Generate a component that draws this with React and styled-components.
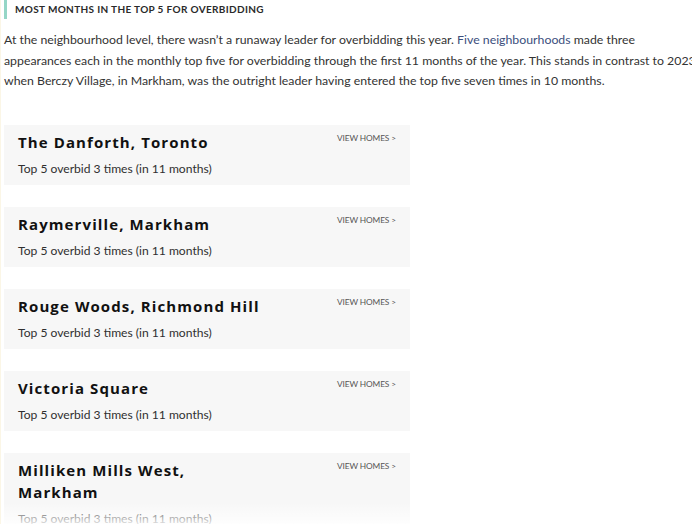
import React from 'react';
import styled, { createGlobalStyle } from 'styled-components';

const Global = createGlobalStyle`
  html, body {
    margin: 0;
    padding: 0;
    background: #fff;
    overflow: hidden;
  }
  body {
    font-family: Lato, "Liberation Sans", sans-serif;
    color: #333;
  }
`;

const Page = styled.div`
  width: 692px;
  height: 524px;
  padding-left: 3px;
  border-left: 1px solid #fbf6e6;
  box-sizing: border-box;
  position: relative;
  overflow: hidden;
`;

const SectionHeading = styled.h3`
  margin: 0;
  height: 19px;
  line-height: 19px;
  border-left: 3px solid #95d6c6;
  padding-left: 8px;
  font-size: 10px;
  font-weight: 700;
  letter-spacing: 0.35px;
  text-transform: uppercase;
  color: #2a2a2a;
`;

const Paragraph = styled.p`
  margin: 11px 0 0;
  font-size: 12.3px;
  line-height: 20.5px;
  color: #333;
  white-space: nowrap;
`;

const Link = styled.a`
  color: #3b4f7d;
  text-decoration: none;
`;

const CardList = styled.div`
  display: flex;
  flex-direction: column;
  gap: 22px;
  margin-top: 33px;
  width: 406px;
`;

const Card = styled.div`
  display: flex;
  justify-content: space-between;
  align-items: flex-start;
  background: #f7f7f7;
  padding: 6px 14px 6px 14px;
`;

const CardBody = styled.div`
  display: flex;
  flex-direction: column;
  gap: 6px;
`;

const Title = styled.div`
  font-family: "Open Sans", "DejaVu Sans", sans-serif;
  font-weight: 700;
  font-size: 15px;
  line-height: 22px;
  letter-spacing: 1.1px;
  color: #111;
  max-width: 246px;
`;

const Subtitle = styled.div`
  font-size: 12.1px;
  line-height: 20px;
  color: #2f2f2f;
`;

const ViewLink = styled.a`
  font-size: 8.3px;
  line-height: 12px;
  margin-top: 1px;
  color: #555;
  text-transform: uppercase;
  letter-spacing: -0.1px;
  white-space: nowrap;
`;

const Fade = styled.div`
  position: absolute;
  left: 0;
  right: 0;
  bottom: 0;
  height: 22px;
  background: linear-gradient(rgba(255, 255, 255, 0), rgba(255, 255, 255, 0.85));
  pointer-events: none;
`;

const hoods = [
  'The Danforth, Toronto',
  'Raymerville, Markham',
  'Rouge Woods, Richmond Hill',
  'Victoria Square',
  'Milliken Mills West, Markham',
];

const App = () => (
  <Page>
    <Global />
    <SectionHeading>Most months in the top 5 for overbidding</SectionHeading>
    <Paragraph>
      At the neighbourhood level, there wasn’t a runaway leader for overbidding this year.{' '}
      <Link>Five neighbourhoods</Link> made three
      <br />
      appearances each in the monthly top five for overbidding through the first 11 months of the
      year. This stands in contrast to 2023
      <br />
      when Berczy Village, in Markham, was the outright leader having entered the top five seven
      times in 10 months.
    </Paragraph>
    <CardList>
      {hoods.map((name) => (
        <Card key={name}>
          <CardBody>
            <Title>{name}</Title>
            <Subtitle>Top 5 overbid 3 times (in 11 months)</Subtitle>
          </CardBody>
          <ViewLink>View homes &gt;</ViewLink>
        </Card>
      ))}
    </CardList>
    <Fade />
  </Page>
);

export default App;
